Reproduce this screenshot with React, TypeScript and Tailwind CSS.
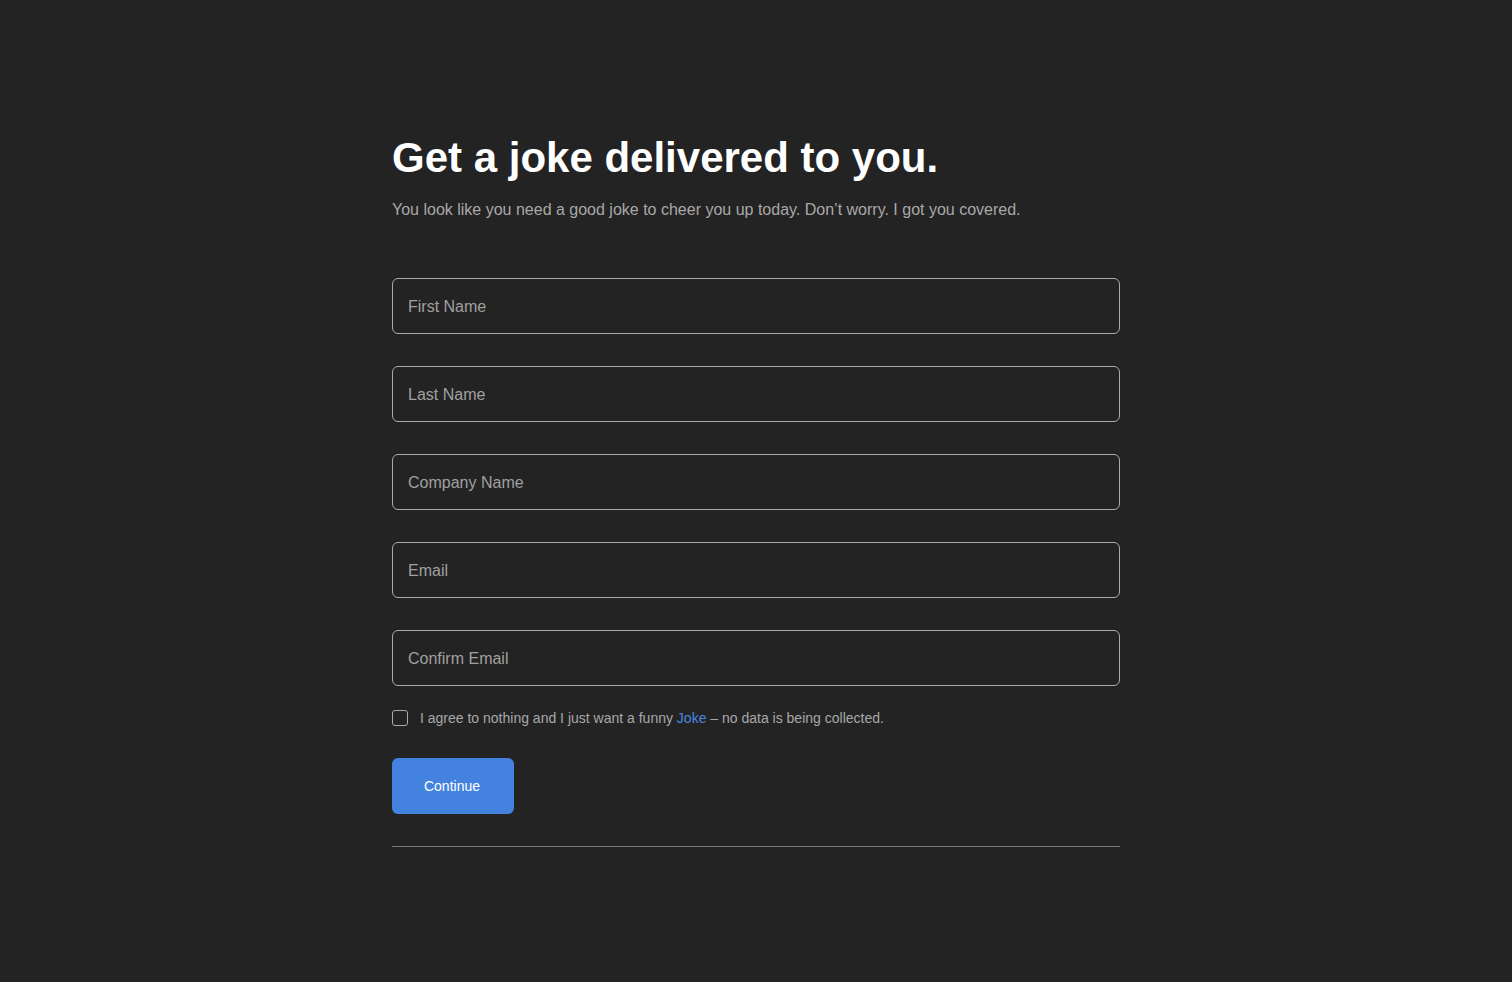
import React from "react";

const fields = ["First Name", "Last Name", "Company Name", "Email", "Confirm Email"];

export default function App() {
  return (
    <div className="min-h-[982px] w-full bg-[#232323]" style={{ fontFamily: '"Liberation Sans", Arial, sans-serif' }}>
      <div className="mx-auto w-[728px] pt-[130px]">
        <h1 className="text-[42px] font-bold leading-[56px] text-white">Get a joke delivered to you.</h1>
        <p className="mt-[14px] text-[16px] leading-[20px] text-[#a8a8a8]">
          You look like you need a good joke to cheer you up today. Don’t worry. I got you covered.
        </p>
        <form className="mt-[58px] flex flex-col gap-[32px]" onSubmit={(e) => e.preventDefault()}>
          {fields.map((f) => (
            <input
              key={f}
              placeholder={f}
              className="h-[56px] w-full rounded-[6px] border border-[#a9a9a9] bg-transparent px-[15px] pt-[2px] text-[16px] text-white outline-none placeholder:text-[#a0a0a0]"
            />
          ))}
        </form>
        <label className="mt-[24px] flex items-center gap-[12px] text-[14px] leading-[16px] text-[#a8a8a8]">
          <span className="h-[16px] w-[16px] rounded-[3px] border border-[#a9a9a9]" />
          <span>
            I agree to nothing and I just want a funny <span className="text-[#4a86e0]">Joke</span> – no data is being collected.
          </span>
        </label>
        <button className="mt-[32px] flex h-[56px] w-[122px] items-center justify-center rounded-[6px] bg-[#4482df] pr-[2px] text-[14px] text-white">
          Continue
        </button>
        <div className="mt-[32px] h-px w-full bg-[#7a7a7a]" />
      </div>
    </div>
  );
}
